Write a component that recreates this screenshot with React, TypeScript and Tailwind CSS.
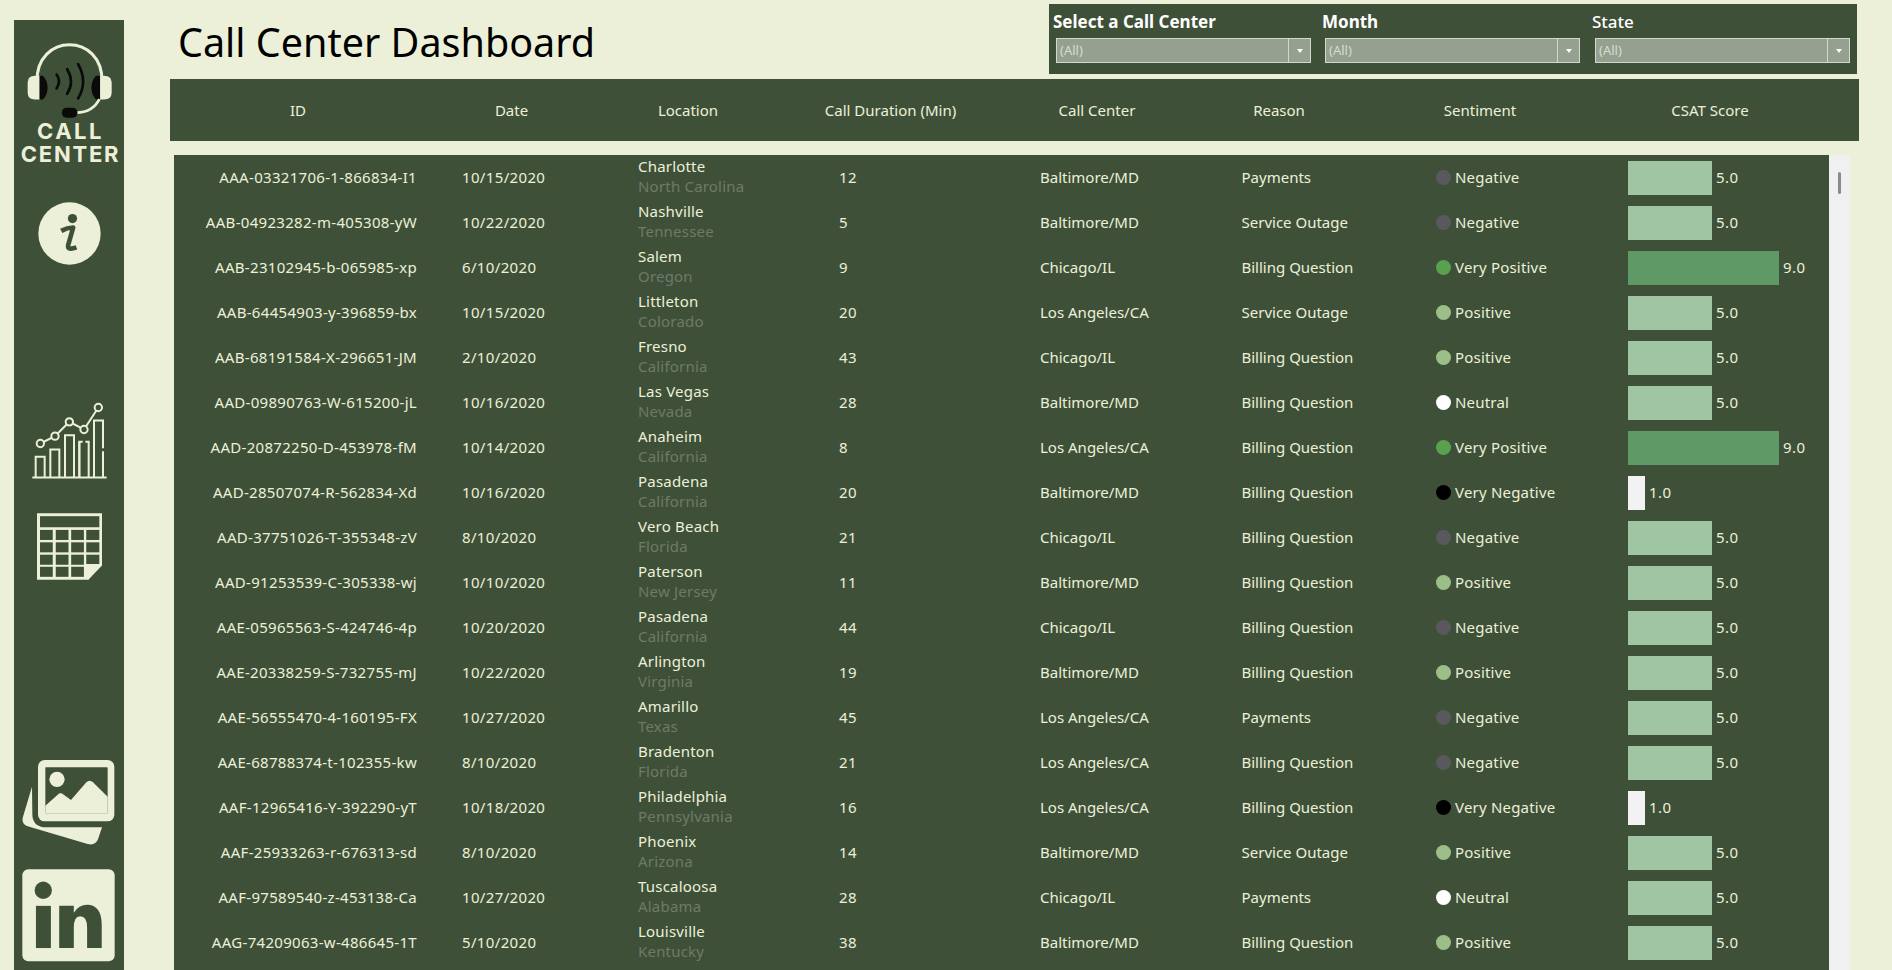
import React from 'react';

type Row = {
  id: string;
  date: string;
  city: string;
  state: string;
  duration: number;
  center: string;
  reason: string;
  sentiment: string;
  score: number;
};

const rows: Row[] = [
  { id: 'AAA-03321706-1-866834-I1', date: '10/15/2020', city: 'Charlotte', state: 'North Carolina', duration: 12, center: 'Baltimore/MD', reason: 'Payments', sentiment: 'Negative', score: 5 },
  { id: 'AAB-04923282-m-405308-yW', date: '10/22/2020', city: 'Nashville', state: 'Tennessee', duration: 5, center: 'Baltimore/MD', reason: 'Service Outage', sentiment: 'Negative', score: 5 },
  { id: 'AAB-23102945-b-065985-xp', date: '6/10/2020', city: 'Salem', state: 'Oregon', duration: 9, center: 'Chicago/IL', reason: 'Billing Question', sentiment: 'Very Positive', score: 9 },
  { id: 'AAB-64454903-y-396859-bx', date: '10/15/2020', city: 'Littleton', state: 'Colorado', duration: 20, center: 'Los Angeles/CA', reason: 'Service Outage', sentiment: 'Positive', score: 5 },
  { id: 'AAB-68191584-X-296651-JM', date: '2/10/2020', city: 'Fresno', state: 'California', duration: 43, center: 'Chicago/IL', reason: 'Billing Question', sentiment: 'Positive', score: 5 },
  { id: 'AAD-09890763-W-615200-jL', date: '10/16/2020', city: 'Las Vegas', state: 'Nevada', duration: 28, center: 'Baltimore/MD', reason: 'Billing Question', sentiment: 'Neutral', score: 5 },
  { id: 'AAD-20872250-D-453978-fM', date: '10/14/2020', city: 'Anaheim', state: 'California', duration: 8, center: 'Los Angeles/CA', reason: 'Billing Question', sentiment: 'Very Positive', score: 9 },
  { id: 'AAD-28507074-R-562834-Xd', date: '10/16/2020', city: 'Pasadena', state: 'California', duration: 20, center: 'Baltimore/MD', reason: 'Billing Question', sentiment: 'Very Negative', score: 1 },
  { id: 'AAD-37751026-T-355348-zV', date: '8/10/2020', city: 'Vero Beach', state: 'Florida', duration: 21, center: 'Chicago/IL', reason: 'Billing Question', sentiment: 'Negative', score: 5 },
  { id: 'AAD-91253539-C-305338-wj', date: '10/10/2020', city: 'Paterson', state: 'New Jersey', duration: 11, center: 'Baltimore/MD', reason: 'Billing Question', sentiment: 'Positive', score: 5 },
  { id: 'AAE-05965563-S-424746-4p', date: '10/20/2020', city: 'Pasadena', state: 'California', duration: 44, center: 'Chicago/IL', reason: 'Billing Question', sentiment: 'Negative', score: 5 },
  { id: 'AAE-20338259-S-732755-mJ', date: '10/22/2020', city: 'Arlington', state: 'Virginia', duration: 19, center: 'Baltimore/MD', reason: 'Billing Question', sentiment: 'Positive', score: 5 },
  { id: 'AAE-56555470-4-160195-FX', date: '10/27/2020', city: 'Amarillo', state: 'Texas', duration: 45, center: 'Los Angeles/CA', reason: 'Payments', sentiment: 'Negative', score: 5 },
  { id: 'AAE-68788374-t-102355-kw', date: '8/10/2020', city: 'Bradenton', state: 'Florida', duration: 21, center: 'Los Angeles/CA', reason: 'Billing Question', sentiment: 'Negative', score: 5 },
  { id: 'AAF-12965416-Y-392290-yT', date: '10/18/2020', city: 'Philadelphia', state: 'Pennsylvania', duration: 16, center: 'Los Angeles/CA', reason: 'Billing Question', sentiment: 'Very Negative', score: 1 },
  { id: 'AAF-25933263-r-676313-sd', date: '8/10/2020', city: 'Phoenix', state: 'Arizona', duration: 14, center: 'Baltimore/MD', reason: 'Service Outage', sentiment: 'Positive', score: 5 },
  { id: 'AAF-97589540-z-453138-Ca', date: '10/27/2020', city: 'Tuscaloosa', state: 'Alabama', duration: 28, center: 'Chicago/IL', reason: 'Payments', sentiment: 'Neutral', score: 5 },
  { id: 'AAG-74209063-w-486645-1T', date: '5/10/2020', city: 'Louisville', state: 'Kentucky', duration: 38, center: 'Baltimore/MD', reason: 'Billing Question', sentiment: 'Positive', score: 5 },
];

const dotColor: Record<string, string> = {
  'Very Positive': 'bg-[#59a14f]',
  Positive: 'bg-[#9cbf8a]',
  Neutral: 'bg-white',
  Negative: 'bg-[#59595d]',
  'Very Negative': 'bg-black',
};

const barStyle: Record<number, string> = {
  1: 'w-[17px] bg-[#f2f2f2]',
  5: 'w-[84px] bg-[#a0c5a3]',
  9: 'w-[151px] bg-[#5f9966]',
};

const light = '#ecf0d8';
const dark = '#3f5039';

const LogoIcon = () => (
  <svg viewBox="80 125 256 230" className="w-[85px] h-[77px]">
    <path d="M110 245 C106 95 310 95 306 245" fill="none" stroke={light} strokeWidth="9" />
    <path d="M118 226 H104 Q82 226 82 246 V276 Q82 297 104 297 H118 Z" fill={light} />
    <path d="M298 226 H312 Q335 226 335 246 V276 Q335 297 312 297 H298 Z" fill={light} />
    <path d="M118 226 H128 Q142 240 142 262 Q142 284 128 297 H118 Z" fill="#0a0a0a" />
    <path d="M300 226 H288 Q274 240 274 262 Q274 284 288 297 H300 Z" fill="#0a0a0a" />
    <g fill="none" stroke="#0a0a0a" strokeWidth="8" strokeLinecap="round">
      <path d="M169 222 Q184 242 169 264" />
      <path d="M201 206 Q224 243 201 280" />
      <path d="M234 191 Q264 243 234 294" />
    </g>
    <path d="M298 296 Q278 336 228 337" fill="none" stroke={light} strokeWidth="8" />
    <rect x="185" y="322" width="47" height="30" rx="14" fill="#0a0a0a" />
  </svg>
);

const InfoIcon = () => (
  <svg viewBox="110 605 190 190" className="w-[63px] h-[63px]">
    <circle cx="205" cy="700" r="94" fill={light} />
    <circle cx="214" cy="655" r="14" fill={dark} />
    <path d="M180 692 Q198 682 216 682 L201 735 Q198 752 226 742" fill="none" stroke={dark} strokeWidth="14" strokeLinejoin="round" />
  </svg>
);

const ChartIcon = () => (
  <svg viewBox="96 65 225 230" className="w-[75px] h-[77px]" fill="none" stroke={light} strokeWidth="6">
    <path d="M97 291 H320" />
    <path d="M107 291 V229 H134 V291" />
    <path d="M151 291 V207 H178 V291" />
    <path d="M195 291 V164 H222 V291" />
    <path d="M238 291 V184 H248 M256 184 H266 V291" />
    <path d="M238 184 V291" />
    <path d="M282 291 V120 H309 V203 M309 212 V291" />
    <path d="M121 189 L165 167 L208 124 L252 147 L295 81" />
    {[[121, 189], [165, 167], [208, 124], [252, 147], [295, 81]].map(([cx, cy]) => (
      <circle key={cx} cx={cx} cy={cy} r="11" fill={dark} />
    ))}
  </svg>
);

const TableIcon = () => {
  const xs = [120, 167, 213, 258];
  const ys = [450, 487, 524, 560];
  return (
    <svg viewBox="111 400 194 199" className="w-[65px] h-[67px]">
      <path d="M111 400 H305 V556 L264 599 H111 Z" fill={light} />
      <rect x="120" y="409" width="177" height="33" fill={dark} />
      {ys.map((y) =>
        xs.map((x) => {
          if (y === 560 && x === 258) return null;
          return <rect key={`${x}-${y}`} x={x} y={y} width={x === 258 ? 39 : 38} height="30" fill={dark} />;
        }),
      )}
      <path d="M252 592 V552 H305 L264 599 Z" fill={light} />
    </svg>
  );
};

const PhotosIcon = () => (
  <svg viewBox="65 85 279 258" className="w-[93px] h-[86px]">
    <path d="M95 168 L68 258 Q62 280 82 287 L262 340 Q285 346 293 326 L305 290 H130 Q96 285 96 250 Z" fill={light} />
    <rect x="113" y="88" width="229" height="184" rx="20" fill={light} />
    <rect x="135" y="110" width="187" height="138" rx="2" fill={dark} />
    <circle cx="170" cy="146" r="23" fill={light} />
    <path d="M135 225 L172 192 Q180 184 190 192 L212 208 L258 155 Q268 145 278 155 L322 198 V248 H135 Z" fill={light} />
  </svg>
);

const LinkedInIcon = () => (
  <svg viewBox="66 414 280 280" className="w-[93px] h-[93px]">
    <rect x="67" y="415" width="278" height="277" rx="18" fill={light} />
    <circle cx="130" cy="478" r="26" fill={dark} />
    <rect x="108" y="525" width="45" height="127" fill={dark} />
    <path d="M178 525 H222 V546 Q238 520 266 522 Q306 526 306 582 V652 H262 V590 Q262 556 241 556 Q222 556 222 590 V652 H178 Z" fill={dark} />
  </svg>
);

const Sidebar = () => (
  <aside className="ml-[14px] mt-[20px] w-[110px] h-[950px] shrink-0 bg-[#3f5039] flex flex-col items-center pt-[22px]">
    <div className="ml-[1px]"><LogoIcon /></div>
    <div className="mt-[1px] ml-[3px] font-['Inter',sans-serif] font-bold text-[#ecf0d8] text-center leading-[23px] text-[22px]">
      <div className="tracking-[2.5px]">CALL</div>
      <div className="tracking-[1.8px]">CENTER</div>
    </div>
    <div className="mt-[36px]"><InfoIcon /></div>
    <div className="mt-[137px] ml-[1px]"><ChartIcon /></div>
    <div className="mt-[34px]"><TableIcon /></div>
    <div className="mt-[179px] ml-[-2px]"><PhotosIcon /></div>
    <div className="mt-[24px] ml-[-2px]"><LinkedInIcon /></div>
  </aside>
);

const FilterSelect = ({ label, bold, className }: { label: string; bold?: boolean; className: string }) => (
  <div className={`w-[255px] ${className}`}>
    <div className={`ml-[-3px] mt-[-2px] text-white text-[17px] leading-[24px] h-[28px] ${bold ? 'font-bold' : 'font-medium'}`}>{label}</div>
    <div className="h-[25px] flex border border-[#d3d8cb] bg-[#95a090] text-[#d8dcd2] text-[13px] leading-[23px]">
      <div className="flex-1 pl-[3px]">(All)</div>
      <div className="w-[22px] border-l border-[#d3d8cb] flex items-center justify-center">
        <div className="w-0 h-0 border-l-[3px] border-r-[3px] border-t-[4px] border-l-transparent border-r-transparent border-t-white" />
      </div>
    </div>
  </div>
);

const Filters = () => (
  <div className="w-[808px] h-[70px] mt-[4px] mr-[35px] bg-[#3f5039] flex pl-[7px] pt-[8px]">
    <FilterSelect label="Select a Call Center" bold className="mr-[14px]" />
    <FilterSelect label="Month" bold className="mr-[15px]" />
    <FilterSelect label="State" className="" />
  </div>
);

const headers = ['ID', 'Date', 'Location', 'Call Duration (Min)', 'Call Center', 'Reason', 'Sentiment', 'CSAT Score'];

const HeaderRow = () => (
  <div className="mt-[5px] h-[62px] w-[1689px] bg-[#3f5039] text-[#ecf0d8] text-[15px] grid grid-cols-[256px_171px_182px_223px_190px_174px_228px_232px] items-center">
    {headers.map((h) => (
      <div key={h} className="text-center">{h}</div>
    ))}
  </div>
);

const TableRow = ({ row }: { row: Row }) => (
  <div className="h-[45px] grid grid-cols-[288px_176px_201px_201px_201.5px_194.5px_192px_1fr] items-center text-[#ecf0d8] text-[15px]">
    <div className="text-right pr-[45px] whitespace-nowrap tracking-[0.3px]">{row.id}</div>
    <div className="tracking-[0.35px]">{row.date}</div>
    <div className="leading-[20px] tracking-[0.2px] mt-[-3px]">
      <div>{row.city}</div>
      <div className="text-[#6d7b68]">{row.state}</div>
    </div>
    <div className="tracking-[0.35px]">{row.duration}</div>
    <div>{row.center}</div>
    <div>{row.reason}</div>
    <div className="flex items-center gap-[4px] tracking-[0.2px]">
      <span className={`w-[15px] h-[15px] rounded-full ${dotColor[row.sentiment]}`} />
      <span>{row.sentiment}</span>
    </div>
    <div className="flex items-center gap-[4px] tracking-[0.5px]">
      <div className={`h-[34px] ${barStyle[row.score]}`} />
      <span>{row.score.toFixed(1)}</span>
    </div>
  </div>
);

export default function App() {
  return (
    <div className="w-[1892px] h-[970px] overflow-hidden bg-[#ecf0d8] flex font-['Noto_Sans',sans-serif]">
      <Sidebar />
      <main className="ml-[46px] flex-1 min-w-0 flex flex-col">
        <div className="flex justify-between items-start h-[74px]">
          <h1 className="ml-[8px] mt-[12px] text-[39.5px] leading-[60px] text-black">Call Center Dashboard</h1>
          <Filters />
        </div>
        <HeaderRow />
        <div className="mt-[14px] ml-[4px] flex flex-1 min-h-0">
          <div className="w-[1655px] bg-[#3f5039] overflow-hidden">
            {rows.map((row) => (
              <TableRow key={row.id} row={row} />
            ))}
          </div>
          <div className="w-[21px] bg-[#f0f0f0] pt-[17px] pl-[9px]">
            <div className="w-[3px] h-[22px] rounded-sm bg-[#8a8a8a]" />
          </div>
        </div>
      </main>
    </div>
  );
}
